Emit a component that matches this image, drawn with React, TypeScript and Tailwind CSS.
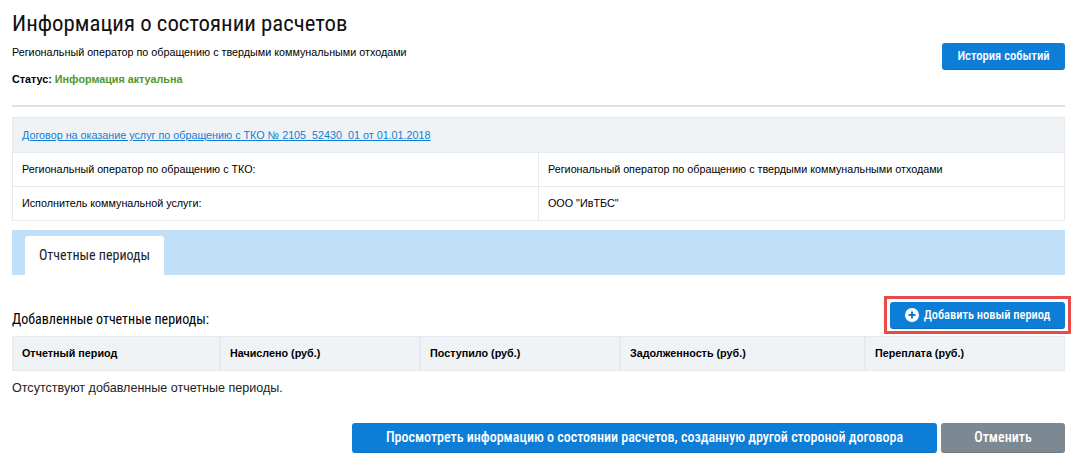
import React from "react";

const sans = "font-['Liberation_Sans',Arial,sans-serif]";
const rob = "font-['Roboto',sans-serif] [font-stretch:75%]";
const btn = `${rob} relative flex items-center justify-center rounded-[3px] text-white font-medium border-b border-black/10`;

export default function App() {
  return (
    <div className={`${sans} w-[1085px] h-[468px] overflow-hidden bg-white text-black px-3 pr-5`}>
      <div className="flex justify-between border-b-2 border-[#dfe1e5] h-[107px]">
        <div>
          <h1 className={`${rob} text-[22.8px] leading-[28px] pt-[10px] font-normal text-[#111]`}>Информация о состоянии расчетов</h1>
          <p className="text-[10.78px] leading-[14px] mt-[7px]">Региональный оператор по обращению с твердыми коммунальными отходами</p>
          <p className="text-[10.78px] leading-[14px] mt-[13px] font-bold">
            Статус: <span className="text-[#4c9a2a]">Информация актуальна</span>
          </p>
        </div>
        <button className={`${btn} w-[123px] h-[27px] mt-[43px] bg-[#0d7ed8] text-[12.6px]`}>История событий</button>
      </div>

      <div className="mt-[10px] border border-[#e6e9ed] text-[10.78px]">
        <div className="h-[35px] bg-[#f0f3f6] border-b border-[#e6e9ed] flex items-center pl-[9px]">
          <a className="text-[#0d7ed8] underline">Договор на оказание услуг по обращению с ТКО № 2105_52430_01 от 01.01.2018</a>
        </div>
        <div className="grid grid-cols-[526px_1fr] h-[34px] border-b border-[#e6e9ed] items-stretch">
          <div className="border-r border-[#e6e9ed] flex items-center pl-[9px]">Региональный оператор по обращению с ТКО:</div>
          <div className="flex items-center pl-[9px]">Региональный оператор по обращению с твердыми коммунальными отходами</div>
        </div>
        <div className="grid grid-cols-[526px_1fr] h-[33px] items-stretch">
          <div className="border-r border-[#e6e9ed] flex items-center pl-[9px]">Исполнитель коммунальной услуги:</div>
          <div className="flex items-center pl-[9px]">ООО "ИвТБС"</div>
        </div>
      </div>

      <div className="mt-[9px] h-[45px] bg-[#c1dff6] pt-[6px] pl-[13px]">
        <div className={`${rob} w-[139px] h-[39px] bg-white rounded-t-[3px] flex items-center justify-center text-[14px] text-[#222]`}>Отчетные периоды</div>
      </div>

      <div className="mt-[27px] flex justify-between items-center h-[27px]">
        <div className={`${rob} text-[14px] pt-[8px]`}>Добавленные отчетные периоды:</div>
        <button className={`${btn} w-[175px] h-[27px] bg-[#0d7ed8] text-[12.4px] gap-[5px]`}>
          <svg width="14" height="14" viewBox="0 0 14 14">
            <circle cx="7" cy="7" r="7" fill="#fff" />
            <path d="M7 3.5v7M3.5 7h7" stroke="#0d7ed8" strokeWidth="2" />
          </svg>
          Добавить новый период
          <span className="absolute -inset-[6px] border-[3px] border-[#e84a4a]" />
        </button>
      </div>

      <div className="mt-[7px] h-[35px] grid grid-cols-[208px_200px_200px_245px_1fr] bg-[#f0f3f6] border border-[#e6e9ed] text-[10.78px] font-bold">
        {["Отчетный период", "Начислено (руб.)", "Поступило (руб.)", "Задолженность (руб.)", "Переплата (руб.)"].map((t, i) => (
          <div key={t} className={`flex items-center pl-[9px] ${i < 4 ? "border-r-2 border-[#e6e9ed]" : ""}`}>{t}</div>
        ))}
      </div>
      <p className="text-[12.55px] leading-[16px] mt-[9px] text-[#222]">Отсутствуют добавленные отчетные периоды.</p>

      <div className="mt-[27px] flex justify-end gap-[4px]">
        <button className={`${btn} w-[585px] h-[30px] bg-[#0d7ed8] text-[14px]`}>Просмотреть информацию о состоянии расчетов, созданную другой стороной договора</button>
        <button className={`${btn} w-[124px] h-[30px] bg-[#7c8992] text-[14px]`}>Отменить</button>
      </div>
    </div>
  );
}
